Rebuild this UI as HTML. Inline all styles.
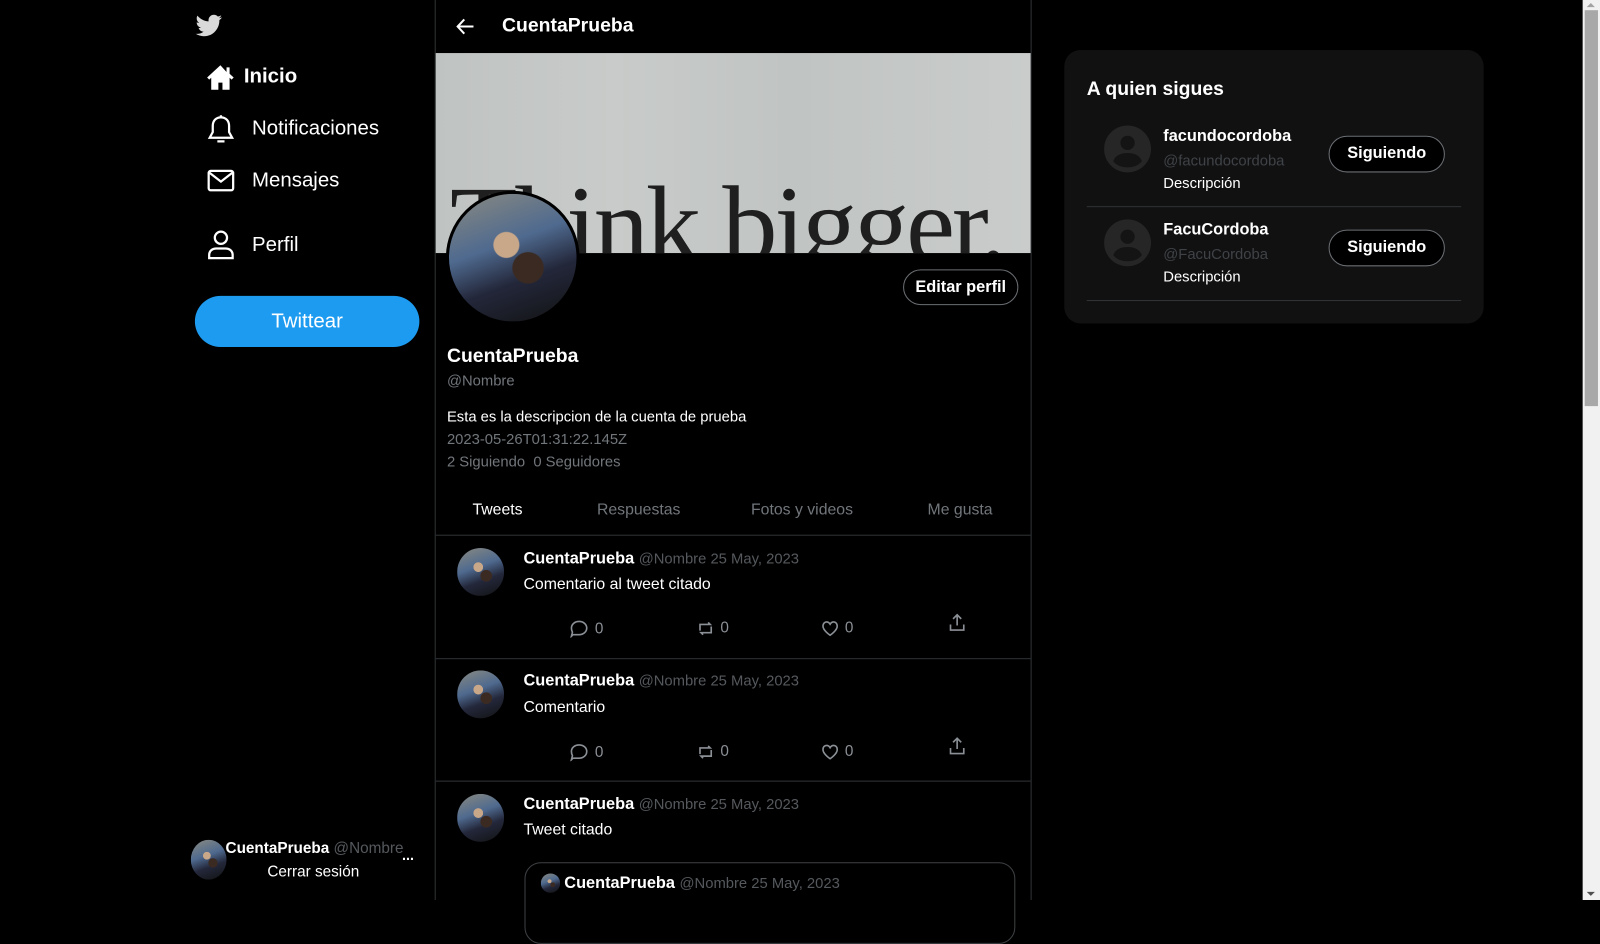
<!DOCTYPE html>
<html><head><meta charset="utf-8"><style>
*{margin:0;padding:0;box-sizing:border-box}
html,body{width:1600px;height:900px;overflow:hidden;background:#000}
#w{position:absolute;left:0;top:0;width:1568px;height:882px;transform:scale(1.020408);transform-origin:0 0;background:#000;color:#e7e9ea;font-family:"Liberation Sans",sans-serif}
.a{position:absolute;white-space:nowrap}
.b{font-weight:bold}
.g{color:#71767b}
.h{color:#55595d}
.nav{font-size:20px;color:#fff}
.av{position:absolute;border-radius:50%;background:radial-gradient(circle at 45% 40%,#c9a88a 0 12%,transparent 13%),radial-gradient(circle at 62% 58%,#3a2a22 0 14%,transparent 15%),linear-gradient(160deg,#8a8a80 0%,#4f6a8f 40%,#23273a 65%,#121212 100%);overflow:hidden}
.btn{position:absolute;border:1px solid #6b6f73;border-radius:20px;background:#000;color:#fff;font-weight:bold;font-size:16px;display:flex;align-items:center;justify-content:center}
.ln{position:absolute;background:#2f3336;height:1px}
.act{position:absolute;color:#8b9096;font-size:15px;display:flex;align-items:center;gap:6px}
</style></head><body><div id="w">
<svg class="a" style="left:191px;top:12px" width="28" height="26" viewBox="0 0 24 24"><path fill="#d9d9d9" d="M23.6 4.6c-.9.4-1.8.6-2.8.8 1-.6 1.8-1.6 2.1-2.7-.9.6-2 1-3.1 1.2C19 2.9 17.7 2.3 16.3 2.3c-2.7 0-4.9 2.2-4.9 4.9 0 .4 0 .8.1 1.100C7.4 8.1 3.8 6.1 1.4 3.1c-.4.7-.7 1.6-.7 2.5 0 1.7.9 3.2 2.2 4.1-.8 0-1.600-.2-2.200-.6v.1c0 2.4 1.7 4.4 3.9 4.8-.4.1-.8.2-1.3.2-.3 0-.6 0-.9-.1.6 2 2.4 3.4 4.6 3.4-1.7 1.3-3.8 2.1-6.1 2.1-.4 0-.8 0-1.200-.1 2.200 1.400 4.800 2.200 7.500 2.200 9.100 0 14-7.500 14-14v-.6c1-.7 1.8-1.600 2.400-2.500z"/></svg>
<svg class="a" style="left:202px;top:63px" width="28" height="26" viewBox="0 0 28 26"><path fill="#fff" d="M14 1 1 13l2 2 2-1.8V25h7v-7h4v7h7V13.2l2 1.8 2-2-4-3.7V3h-3v4.5z"/></svg>
<div class="a nav b" style="left:239px;top:64px">Inicio</div>
<svg class="a" style="left:203px;top:112px" width="27" height="30" viewBox="0 0 27 30" fill="none" stroke="#fff" stroke-width="2.2"><path d="M13.5 3c-5 0-8 3.5-8 8.5v6L2.5 23h22l-3-5.5v-6c0-5-3-8.5-8-8.5z"/><path d="M13.5 1v2M10 26.5h7"/></svg>
<div class="a nav" style="left:247px;top:115px">Notificaciones</div>
<svg class="a" style="left:203px;top:166px" width="27" height="22" viewBox="0 0 27 22" fill="none" stroke="#fff" stroke-width="2.2"><rect x="1.5" y="1.5" width="24" height="19" rx="2"/><path d="M2 3l11.5 9L25 3"/></svg>
<div class="a nav" style="left:247px;top:166px">Mensajes</div>
<svg class="a" style="left:203px;top:225px" width="27" height="30" viewBox="0 0 27 30" fill="none" stroke="#fff" stroke-width="2.2"><circle cx="13.5" cy="8" r="6"/><path d="M2 28v-3c0-4 3-6.5 7-6.5h9c4 0 7 2.5 7 6.5v3z"/></svg>
<div class="a nav" style="left:247px;top:229px">Perfil</div>
<div class="a" style="left:191px;top:290px;width:220px;height:50px;border-radius:25px;background:#1d9bf0;color:#fff;font-size:20px;display:flex;align-items:center;justify-content:center">Twittear</div>
<div class="av" style="left:187px;top:823px;width:35px;height:39px"></div>
<div class="a" style="left:221px;top:823px;font-size:15px"><span class="b" style="color:#fff">CuentaPrueba</span> <span class="h">@Nombre</span></div>
<div class="a" style="left:262px;top:846px;font-size:15px;color:#fff">Cerrar sesión</div>
<div class="a b" style="left:394px;top:830px;font-size:14px;color:#fff">...</div>
<div class="a" style="left:426px;top:0;width:1px;height:882px;background:#2f3336"></div>
<div class="a" style="left:1010px;top:0;width:1px;height:882px;background:#2f3336"></div>
<svg class="a" style="left:447px;top:17px" width="18" height="18" viewBox="0 0 18 18" fill="none" stroke="#fff" stroke-width="2"><path d="M17 9H2M8 2 1.5 9 8 16"/></svg>
<div class="a b" style="left:492px;top:15px;font-size:19px;color:#fff">CuentaPrueba</div>
<div class="a" style="left:427px;top:52px;width:583px;height:196px;overflow:hidden;background:linear-gradient(90deg,#bfc3c1,#c8cbc9 30%,#c0c4c2 60%,#c9ccca)">
<div class="a" style="left:14px;top:108px;font-family:'Liberation Serif',serif;font-size:108px;color:#1f1f1f;letter-spacing:-3px">Think bigger.</div>
</div>
<div class="av" style="left:437px;top:187px;width:131px;height:131px;border:3px solid #000"></div>
<div class="btn" style="left:885px;top:264px;width:113px;height:35px">Editar perfil</div>
<div class="a b" style="left:438px;top:339px;font-size:19px;color:#fff">CuentaPrueba</div>
<div class="a g" style="left:438px;top:366px;font-size:14.5px">@Nombre</div>
<div class="a" style="left:438px;top:401px;font-size:14.5px;color:#fff">Esta es la descripcion de la cuenta de prueba</div>
<div class="a g" style="left:438px;top:423px;font-size:14.5px">2023-05-26T01:31:22.145Z</div>
<div class="a g" style="left:438px;top:445px;font-size:14.5px">2 Siguiendo&nbsp; 0 Seguidores</div>
<div class="a" style="left:463px;top:491px;font-size:15.5px;color:#fff">Tweets</div>
<div class="a g" style="left:585px;top:491px;font-size:15.5px">Respuestas</div>
<div class="a g" style="left:736px;top:491px;font-size:15.5px">Fotos y videos</div>
<div class="a g" style="left:909px;top:491px;font-size:15.5px">Me gusta</div>
<div class="ln" style="left:427px;top:524px;width:583px"></div>
<div class="ln" style="left:427px;top:645px;width:583px"></div>
<div class="ln" style="left:427px;top:765px;width:583px"></div>
<div class="av" style="left:448px;top:537px;width:46px;height:47px"></div>
<div class="a" style="left:513px;top:539px;font-size:16px"><span class="b" style="color:#fff">CuentaPrueba</span> <span class="h" style="font-size:14.5px">@Nombre 25 May, 2023</span></div>
<div class="a" style="left:513px;top:564px;font-size:15.5px;color:#fff">Comentario al tweet citado</div>
<div class="av" style="left:448px;top:657px;width:46px;height:47px"></div>
<div class="a" style="left:513px;top:659px;font-size:16px"><span class="b" style="color:#fff">CuentaPrueba</span> <span class="h" style="font-size:14.5px">@Nombre 25 May, 2023</span></div>
<div class="a" style="left:513px;top:685px;font-size:15.5px;color:#fff">Comentario</div>
<div class="av" style="left:448px;top:778px;width:46px;height:47px"></div>
<div class="a" style="left:513px;top:780px;font-size:16px"><span class="b" style="color:#fff">CuentaPrueba</span> <span class="h" style="font-size:14.5px">@Nombre 25 May, 2023</span></div>
<div class="a" style="left:513px;top:805px;font-size:15.5px;color:#fff">Tweet citado</div>
<div class="a" style="left:514px;top:845px;width:481px;height:80px;border:1px solid #3e4144;border-radius:16px"></div>
<div class="av" style="left:530px;top:856px;width:19px;height:19px"></div>
<div class="a" style="left:553px;top:857px;font-size:16px"><span class="b" style="color:#fff">CuentaPrueba</span> <span class="h" style="font-size:14.5px">@Nombre 25 May, 2023</span></div>
<div class="act" style="left:558px;top:607px"><svg width="19" height="18" viewBox="0 0 19 18" fill="none" stroke="#8b9096" stroke-width="1.6"><path d="M9.5 2c4.2 0 7.5 2.8 7.5 6.5S13.7 15 9.5 15H3.5L2 16.5 3 12.5c-.6-1.1-1-2.3-1-4C2 4.8 5.3 2 9.5 2z"/></svg>0</div>
<div class="act" style="left:683px;top:607px"><svg width="17" height="16" viewBox="0 0 17 16" fill="none" stroke="#8b9096" stroke-width="1.6"><path d="M3 10V4h10l-2-2M14 6v6H4l2 2"/></svg>0</div>
<div class="act" style="left:805px;top:607px"><svg width="17" height="16" viewBox="0 0 17 16" fill="none" stroke="#8b9096" stroke-width="1.6"><path d="M8.5 14.5S1.5 10 1.5 5.5C1.5 3 3.2 1.5 5 1.5c1.6 0 2.8 1 3.5 2.2C9.2 2.5 10.4 1.5 12 1.5c1.8 0 3.5 1.5 3.5 4 0 4.5-7 9-7 9z"/></svg>0</div>
<svg class="a" style="left:930px;top:601px" width="16" height="18" viewBox="0 0 16 18" fill="none" stroke="#8b9096" stroke-width="1.6"><path d="M8 12V2M4 5.5 8 1.5l4 4M1.5 11v5.5h13V11"/></svg>
<div class="act" style="left:558px;top:728px"><svg width="19" height="18" viewBox="0 0 19 18" fill="none" stroke="#8b9096" stroke-width="1.6"><path d="M9.5 2c4.2 0 7.5 2.8 7.5 6.5S13.7 15 9.5 15H3.5L2 16.5 3 12.5c-.6-1.1-1-2.3-1-4C2 4.8 5.3 2 9.5 2z"/></svg>0</div>
<div class="act" style="left:683px;top:728px"><svg width="17" height="16" viewBox="0 0 17 16" fill="none" stroke="#8b9096" stroke-width="1.6"><path d="M3 10V4h10l-2-2M14 6v6H4l2 2"/></svg>0</div>
<div class="act" style="left:805px;top:728px"><svg width="17" height="16" viewBox="0 0 17 16" fill="none" stroke="#8b9096" stroke-width="1.6"><path d="M8.5 14.5S1.5 10 1.5 5.5C1.5 3 3.2 1.5 5 1.5c1.6 0 2.8 1 3.5 2.2C9.2 2.5 10.4 1.5 12 1.5c1.8 0 3.5 1.5 3.5 4 0 4.5-7 9-7 9z"/></svg>0</div>
<svg class="a" style="left:930px;top:722px" width="16" height="18" viewBox="0 0 16 18" fill="none" stroke="#8b9096" stroke-width="1.6"><path d="M8 12V2M4 5.5 8 1.5l4 4M1.5 11v5.5h13V11"/></svg>
<div class="a" style="left:1043px;top:49px;width:411px;height:268px;background:#111112;border-radius:16px"></div>
<div class="a b" style="left:1065px;top:77px;font-size:19px;color:#fff">A quien sigues</div>
<svg class="a" style="left:1082px;top:123px" width="46" height="46" viewBox="0 0 46 46"><circle cx="23" cy="23" r="23" fill="#262626"/><circle cx="23" cy="17" r="7" fill="#141414"/><path d="M9 35c2-6 8-8 14-8s12 2 14 8c-3 4-8 6-14 6s-11-2-14-6z" fill="#141414"/></svg>
<div class="a b" style="left:1140px;top:125px;font-size:16px;color:#fff">facundocordoba</div>
<div class="a" style="left:1140px;top:150px;font-size:14.5px;color:#3f4347">@facundocordoba</div>
<div class="a" style="left:1140px;top:172px;font-size:14.5px;color:#fff">Descripción</div>
<div class="btn" style="left:1302px;top:133px;width:114px;height:36px">Siguiendo</div>
<div class="ln" style="left:1065px;top:202px;width:367px"></div>
<svg class="a" style="left:1082px;top:215px" width="46" height="46" viewBox="0 0 46 46"><circle cx="23" cy="23" r="23" fill="#262626"/><circle cx="23" cy="17" r="7" fill="#141414"/><path d="M9 35c2-6 8-8 14-8s12 2 14 8c-3 4-8 6-14 6s-11-2-14-6z" fill="#141414"/></svg>
<div class="a b" style="left:1140px;top:217px;font-size:16px;color:#fff">FacuCordoba</div>
<div class="a" style="left:1140px;top:242px;font-size:14.5px;color:#3f4347">@FacuCordoba</div>
<div class="a" style="left:1140px;top:264px;font-size:14.5px;color:#fff">Descripción</div>
<div class="btn" style="left:1302px;top:225px;width:114px;height:36px">Siguiendo</div>
<div class="ln" style="left:1065px;top:294px;width:367px"></div>
<div class="a" style="left:1551px;top:0;width:17px;height:882px;background:#f1f1f1"></div>
<div class="a" style="left:1553px;top:10px;width:13px;height:388px;background:#a8a8a8"></div>
<div class="a" style="left:1555px;top:3px;width:0;height:0;border:4px solid transparent;border-bottom-color:#a3a3a3;border-top:0"></div>
<div class="a" style="left:1555px;top:874px;width:0;height:0;border:4px solid transparent;border-top-color:#505050;border-bottom:0"></div>
</div></body></html>
